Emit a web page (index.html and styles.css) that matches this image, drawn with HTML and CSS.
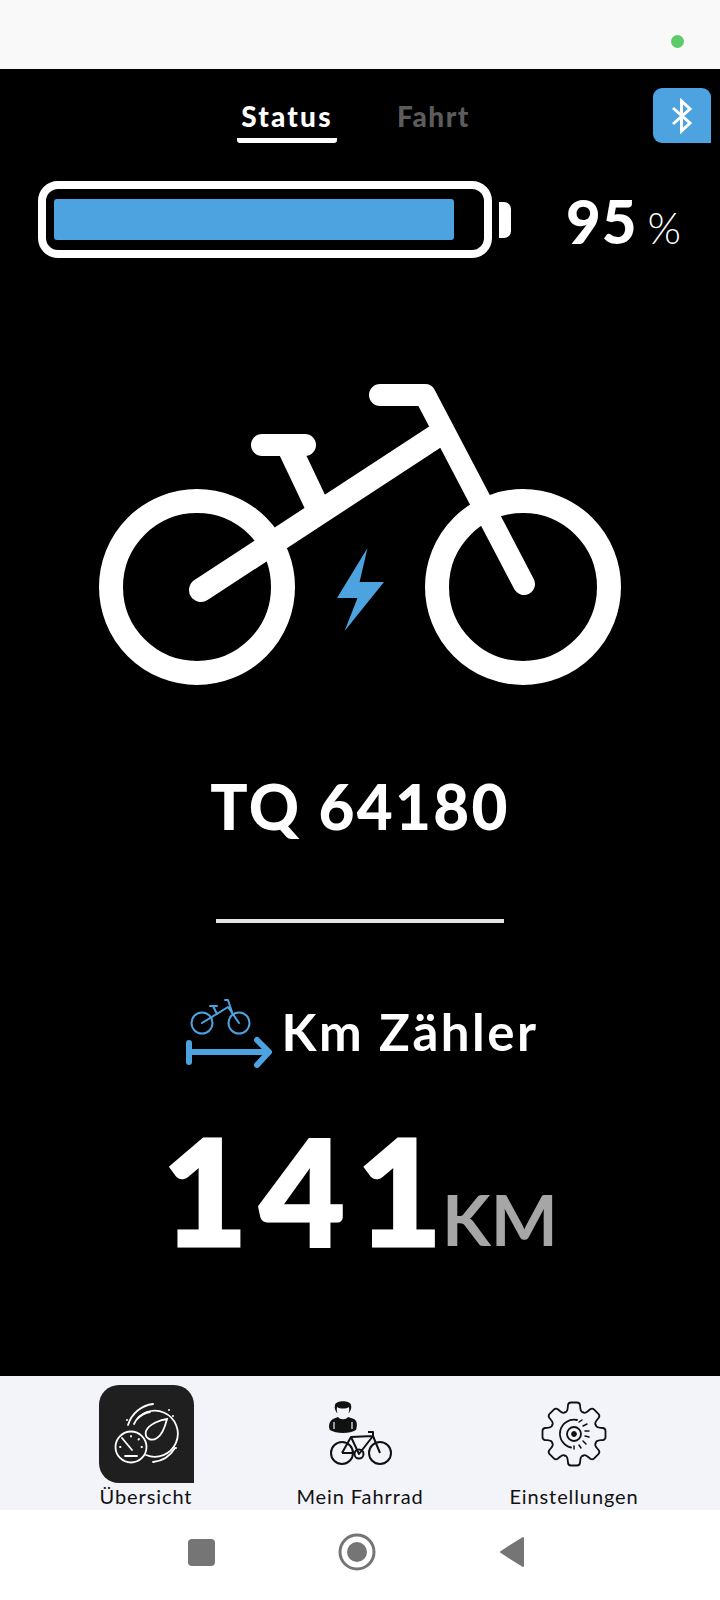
FILE: index.html
```html
<!DOCTYPE html>
<html>
<head>
    <meta charset="UTF-8">
    <title>Status</title>
    <link rel="stylesheet" href="styles.css">
</head>
<body>
    <div class="status-bar"><span class="status-dot"></span></div>

    <div class="main">
        <div class="tabs-row">
            <div class="tabs">
                <div class="tab tab-active">Status</div>
                <div class="tab">Fahrt</div>
            </div>
            <div class="bt-btn">
                <svg width="24" height="36" viewBox="0 0 24 36" fill="none" stroke="#fff" stroke-width="3">
                    <path d="M3 10 L20 25 L11.5 33 V3 L20 11 L3 26"/>
                </svg>
            </div>
        </div>

        <div class="battery-row">
            <div class="battery"><div class="battery-fill"></div></div>
            <div class="battery-nub"></div>
            <div class="battery-value">95<span class="battery-unit">%</span></div>
        </div>

        <svg class="bike" width="540" height="320" viewBox="90 380 540 320" fill="none" stroke="#fff" stroke-linecap="round" stroke-linejoin="round">
            <circle cx="197" cy="586" r="86" stroke-width="24"/>
            <circle cx="523" cy="586" r="86" stroke-width="24"/>
            <path d="M201 589 L438 434" stroke-width="24"/>
            <path d="M524 583 L425 394 H380" stroke-width="22"/>
            <path d="M262 444 H305" stroke-width="22"/>
            <path d="M288 444 L316 503" stroke-width="24" stroke-linecap="butt"/>
            <path d="M367.5 547 L359.6 581 H384 L344.6 630 L357.5 597 H337 Z" fill="#4ca3e0" stroke="none"/>
        </svg>

        <div class="bike-name">TQ 64180</div>
        <div class="divider"></div>

        <div class="counter-title">
            <svg width="92" height="72" viewBox="180 994 92 72" fill="none" stroke="#4ca3e0" stroke-linecap="round" stroke-linejoin="round">
                <g stroke-width="2">
                    <circle cx="200" cy="1021" r="10.5"/>
                    <circle cx="237" cy="1021" r="10.5"/>
                    <path d="M200 1021 L226 1005 L237 1021 M223 998 H226 L230 1010"/>
                    <path d="M208 1004 H215 M211 1004 L215 1012"/>
                </g>
                <g stroke-width="6">
                    <path d="M187 1041 V1060 M187 1050 H266 M255 1038 L267 1050 L255 1063"/>
                </g>
            </svg>
            <span>Km Zähler</span>
        </div>

        <div class="counter-value"><span class="counter-spaced">14</span>1<span class="counter-unit">KM</span></div>
    </div>

    <div class="nav">
        <div class="nav-item">
            <div class="nav-icon nav-icon-active">
                <svg width="72" height="72" viewBox="0 0 72 72" fill="none" stroke="#fff" stroke-width="1.8" stroke-linecap="round">
                    <path d="M24 26 A23 23 0 1 1 36 57"/>
                    <path d="M18 27 A30 30 0 0 1 43 6 M43 64 A29 29 0 0 0 65 50 M28 20 A23 23 0 0 1 40 14"/>
                    <path d="M57 21 C50 22 39 26 36 33 C34 40 41 44 47 40 C52 37 55 29 57 21 Z"/>
                    <path d="M59 12 V12 M63 18 V18 M66 50 V50 M17 22 V22" stroke-width="2"/>
                    <circle cx="21" cy="49" r="15.5" fill="#1f1f1f"/>
                    <path d="M12 40 L22 52 M15 58 H27 M10 49 H10.5 M32 49 H31.5 M21 38 V38.5 M29 41 L28.5 41.5"/>
                </svg>
            </div>
            <div class="nav-label">Übersicht</div>
        </div>

        <div class="nav-item">
            <div class="nav-icon">
                <svg width="72" height="72" viewBox="324 1397 72 72" fill="none" stroke="#111" stroke-width="2" stroke-linejoin="round">
                    <path d="M335 1404 C336 1399 350 1399 351 1404 C352 1408 350 1410 349 1412 L337 1412 C336 1410 334 1408 335 1404 Z" fill="#111" stroke="none"/>
                    <path d="M337 1406 C340 1408 346 1408 349 1406 C350 1412 347 1417 343 1417 C339 1417 336 1412 337 1406 Z" fill="#f3f4f9" stroke="none"/>
                    <path d="M333 1418 L338 1416 C340 1419 346 1419 348 1416 L354 1418 C358 1420 357 1426 356 1429 C350 1433 336 1433 330 1429 C328 1426 329 1420 333 1418 Z" fill="#111" stroke="none"/>
                    <path d="M334 1421 V1428 M352 1421 V1428" stroke="#f3f4f9" stroke-width="1.2"/>
                    <circle cx="342" cy="1452" r="11"/>
                    <circle cx="380" cy="1452" r="11"/>
                    <circle cx="359" cy="1453" r="4.5"/>
                    <path d="M342 1452 L351 1436 L373 1435 L359 1453 L351 1436 M342 1452 H355 M373 1435 L380 1452 M368 1431 H373 L373 1435"/>
                </svg>
            </div>
            <div class="nav-label">Mein Fahrrad</div>
        </div>

        <div class="nav-item">
            <div class="nav-icon">
                <svg width="72" height="72" viewBox="-36 -36 72 72" fill="none" stroke="#111" stroke-width="1.8" stroke-linecap="round">
                    <defs>
                        <path id="tooth" d="M-9 -21.7 C-6 -22 -6.5 -25 -6 -29 Q-5.5 -31.5 -3 -31.5 H3 Q5.5 -31.5 6 -29 C6.5 -25 6 -22 9 -21.7"/>
                    </defs>
                    <use href="#tooth"/>
                    <use href="#tooth" transform="rotate(45)"/>
                    <use href="#tooth" transform="rotate(90)"/>
                    <use href="#tooth" transform="rotate(135)"/>
                    <use href="#tooth" transform="rotate(180)"/>
                    <use href="#tooth" transform="rotate(225)"/>
                    <use href="#tooth" transform="rotate(270)"/>
                    <use href="#tooth" transform="rotate(315)"/>
                    <circle cx="0" cy="0" r="7"/>
                    <circle cx="0" cy="0" r="2" fill="#111"/>
                    <path d="M3 -14 A14 14 0 0 0 -3 13.5"/>
                    <path d="M5 -12 L8 -14 M9 -8 L13 -10 M11 -3 H15 M11 2 L15 3 M9 7 L12 10 M5 11 L7 14 M0 12 V15" stroke-width="1.5"/>
                </svg>
            </div>
            <div class="nav-label">Einstellungen</div>
        </div>
    </div>

    <div class="sys-nav">
        <span class="sys-square"></span>
        <svg width="38" height="38" viewBox="0 0 38 38">
            <circle cx="19" cy="19" r="17" fill="none" stroke="#757575" stroke-width="3"/>
            <circle cx="19" cy="19" r="10" fill="#757575"/>
        </svg>
        <svg width="26" height="32" viewBox="0 0 26 32">
            <path d="M2 16 L24 2 V30 Z" fill="#757575" stroke="#757575" stroke-width="2" stroke-linejoin="round"/>
        </svg>
    </div>
</body>
</html>
```

FILE: styles.css
```css
body {
    margin: 0;
    width: 720px;
    height: 1600px;
    overflow: hidden;
    display: flex;
    flex-direction: column;
    font-family: Lato, "Liberation Sans", sans-serif;
    background-color: #fff;
}
.status-bar {
    height: 69px;
    flex-shrink: 0;
    background-color: #f9f9f9;
    display: flex;
    justify-content: flex-end;
    align-items: center;
    padding-top: 13px;
    padding-right: 36px;
    box-sizing: border-box;
}
.status-dot {
    width: 13px;
    height: 13px;
    border-radius: 50%;
    background-color: #5ecb6b;
}
.main {
    flex: 1;
    background-color: #000;
    color: #fff;
    display: flex;
    flex-direction: column;
    align-items: center;
}
.tabs-row {
    align-self: stretch;
    height: 55px;
    margin-top: 19px;
    padding-left: 237px;
    padding-right: 9px;
    display: flex;
    justify-content: space-between;
}
.tabs {
    display: flex;
    gap: 60px;
}
.tab {
    height: 55px;
    width: 72px;
    box-sizing: border-box;
    padding-top: 11px;
    font-size: 28px;
    line-height: 34px;
    font-weight: 900;
    letter-spacing: 1.5px;
    color: #5c5c5c;
    text-align: center;
    white-space: nowrap;
}
.tab-active {
    width: 100px;
    color: #fff;
    letter-spacing: 2.2px;
    border-bottom: 5px solid #fff;
    border-radius: 0 0 3px 3px;
}
.bt-btn {
    width: 58px;
    height: 55px;
    background-color: #4ca3e0;
    border-radius: 9px 9px 0 9px;
    display: flex;
    align-items: center;
    justify-content: center;
}
.battery-row {
    align-self: stretch;
    height: 77px;
    margin-top: 38px;
    padding-left: 38px;
    display: flex;
    align-items: center;
}
.battery {
    width: 454px;
    height: 77px;
    box-sizing: border-box;
    border: 8px solid #fff;
    border-radius: 20px;
    padding: 10px 8px;
}
.battery-fill {
    width: 400px;
    height: 41px;
    background-color: #4ca3e0;
    border-radius: 3px;
}
.battery-nub {
    width: 12px;
    height: 36px;
    margin-left: 7px;
    background-color: #fff;
    border-radius: 0 7px 7px 0;
}
.battery-value {
    margin-left: 55px;
    padding-top: 9px;
    font-size: 60px;
    line-height: 77px;
    font-weight: 900;
    letter-spacing: 1px;
    white-space: nowrap;
}
.battery-unit {
    margin-left: 10px;
    font-size: 43px;
    font-weight: 300;
}
.bike {
    display: block;
    margin-top: 123px;
}
.bike-name {
    margin-top: 67px;
    font-size: 62px;
    line-height: 76px;
    font-weight: 900;
    letter-spacing: 2.3px;
}
.divider {
    width: 288px;
    height: 4px;
    margin-top: 75px;
    background-color: #e4e4e4;
}
.counter-title {
    margin-top: 73px;
    display: flex;
    align-items: center;
    gap: 8px;
    font-size: 51px;
    line-height: 72px;
    font-weight: 700;
    letter-spacing: 2.5px;
}
.counter-value {
    margin-top: 31px;
    font-size: 147px;
    line-height: 180px;
    font-weight: 900;
    -webkit-text-stroke: 3px #fff;
    white-space: nowrap;
}
.counter-spaced {
    letter-spacing: 12px;
}
.counter-unit {
    font-size: 71px;
    font-weight: 700;
    color: #a6a6a6;
    -webkit-text-stroke: 0;
}
.nav {
    height: 134px;
    flex-shrink: 0;
    background-color: #f3f4f9;
    box-sizing: border-box;
    padding-top: 9px;
    padding-left: 39px;
    overflow: hidden;
    display: grid;
    grid-template-columns: 214px 214px 214px;
}
.nav-item {
    display: flex;
    flex-direction: column;
    align-items: center;
}
.nav-icon {
    width: 95px;
    height: 98px;
    display: flex;
    align-items: center;
    justify-content: center;
}
.nav-icon-active {
    background-color: #1f1f1f;
    border-radius: 20px 20px 0 20px;
}
.nav-label {
    margin-top: 1px;
    font-size: 20px;
    line-height: 24px;
    letter-spacing: 0.9px;
    color: #111;
    white-space: nowrap;
}
.sys-nav {
    height: 90px;
    flex-shrink: 0;
    box-sizing: border-box;
    padding: 0 0 6px 188px;
    display: flex;
    align-items: center;
    gap: 123px;
    background-color: #fff;
}
.sys-square {
    width: 27px;
    height: 27px;
    border-radius: 4px;
    background-color: #757575;
}
```
